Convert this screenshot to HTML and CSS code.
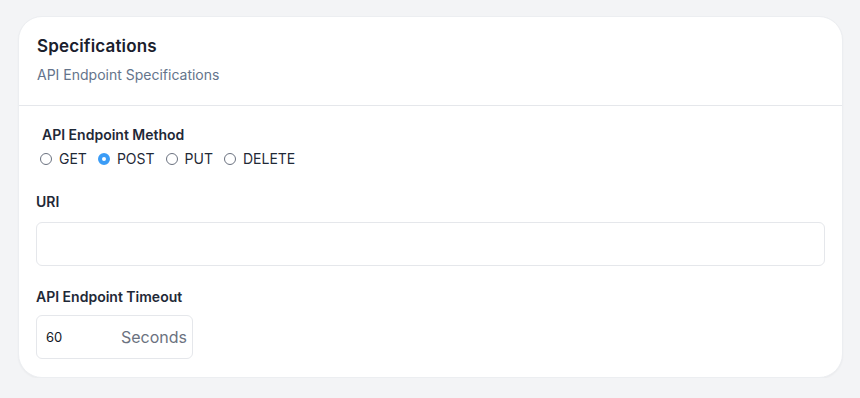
FILE: index.html
```html
<!DOCTYPE html>
<html lang="en">

<head>
    <meta charset="UTF-8">
    <meta name="viewport" content="width=device-width, initial-scale=1.0">
    <title>Specifications</title>
    <link rel="stylesheet" href="styles.css">
</head>

<body>
    <div class="card">
        <div class="card-head">
            <h2 class="title">Specifications</h2>
            <p class="subtitle">API Endpoint Specifications</p>
        </div>
        <div class="card-body">
            <div class="field method">
                <div class="label method-label">API Endpoint Method</div>
                <div class="radios">
                    <label class="radio"><span class="dot"></span>GET</label>
                    <label class="radio"><span class="dot checked"></span>POST</label>
                    <label class="radio"><span class="dot"></span>PUT</label>
                    <label class="radio"><span class="dot"></span>DELETE</label>
                </div>
            </div>
            <div class="field">
                <div class="label">URI</div>
                <div class="input uri"></div>
            </div>
            <div class="field">
                <div class="label">API Endpoint Timeout</div>
                <div class="input timeout">
                    <span class="value">60</span>
                    <span class="unit">Seconds</span>
                </div>
            </div>
        </div>
    </div>
</body>

</html>
```

FILE: styles.css
```css
* {
    margin: 0;
    padding: 0;
    box-sizing: border-box;
}

body {
    background: #f3f4f6;
    font-family: Inter, "Liberation Sans", sans-serif;
    color: #1f2937;
    padding: 16px 17px 0 18px;
}

.card {
    background: #fff;
    border-radius: 24px;
    border: 1px solid #eceef1;
    box-shadow: 0 1px 2px rgba(0, 0, 0, 0.04);
}

.card-head {
    padding: 17px 18px 20px;
    border-bottom: 1px solid #e5e7eb;
}

.title {
    font-size: 17px;
    line-height: 24px;
    font-weight: 600;
    letter-spacing: 0.15px;
    color: #1a202c;
}

.subtitle {
    margin-top: 7px;
    font-size: 14px;
    line-height: 20px;
    color: #64748b;
}

.card-body {
    padding: 19px 17px 18px;
    display: flex;
    flex-direction: column;
}

.field {
    display: flex;
    flex-direction: column;
}

.label {
    font-size: 14px;
    line-height: 20px;
    font-weight: 600;
    color: #1f2937;
}

.method-label {
    padding-left: 6px;
    margin-bottom: 4px;
}

.radios {
    display: flex;
    padding-left: 4px;
    gap: 11px;
    font-size: 14px;
    line-height: 20px;
    color: #1f2937;
}

.radio {
    display: flex;
    align-items: center;
    gap: 7px;
}

.dot {
    width: 12px;
    height: 12px;
    border-radius: 50%;
    border: 1px solid #6b7280;
}

.dot.checked {
    border: 4px solid #3b9cf6;
    background: #fff;
}

.field + .field {
    margin-top: 23px;
}

.field + .field + .field {
    margin-top: 21px;
}

.label + .input {
    margin-top: 10px;
}

.input {
    height: 44px;
    border: 1px solid #e5e7eb;
    border-radius: 6px;
}

.timeout {
    width: 157px;
    display: flex;
    align-items: center;
    justify-content: space-between;
    padding: 0 5px 0 9px;
    margin-top: 8px !important;
}

.value {
    font-size: 13px;
    color: #111827;
}

.unit {
    font-size: 16px;
    color: #6b7280;
}
```
